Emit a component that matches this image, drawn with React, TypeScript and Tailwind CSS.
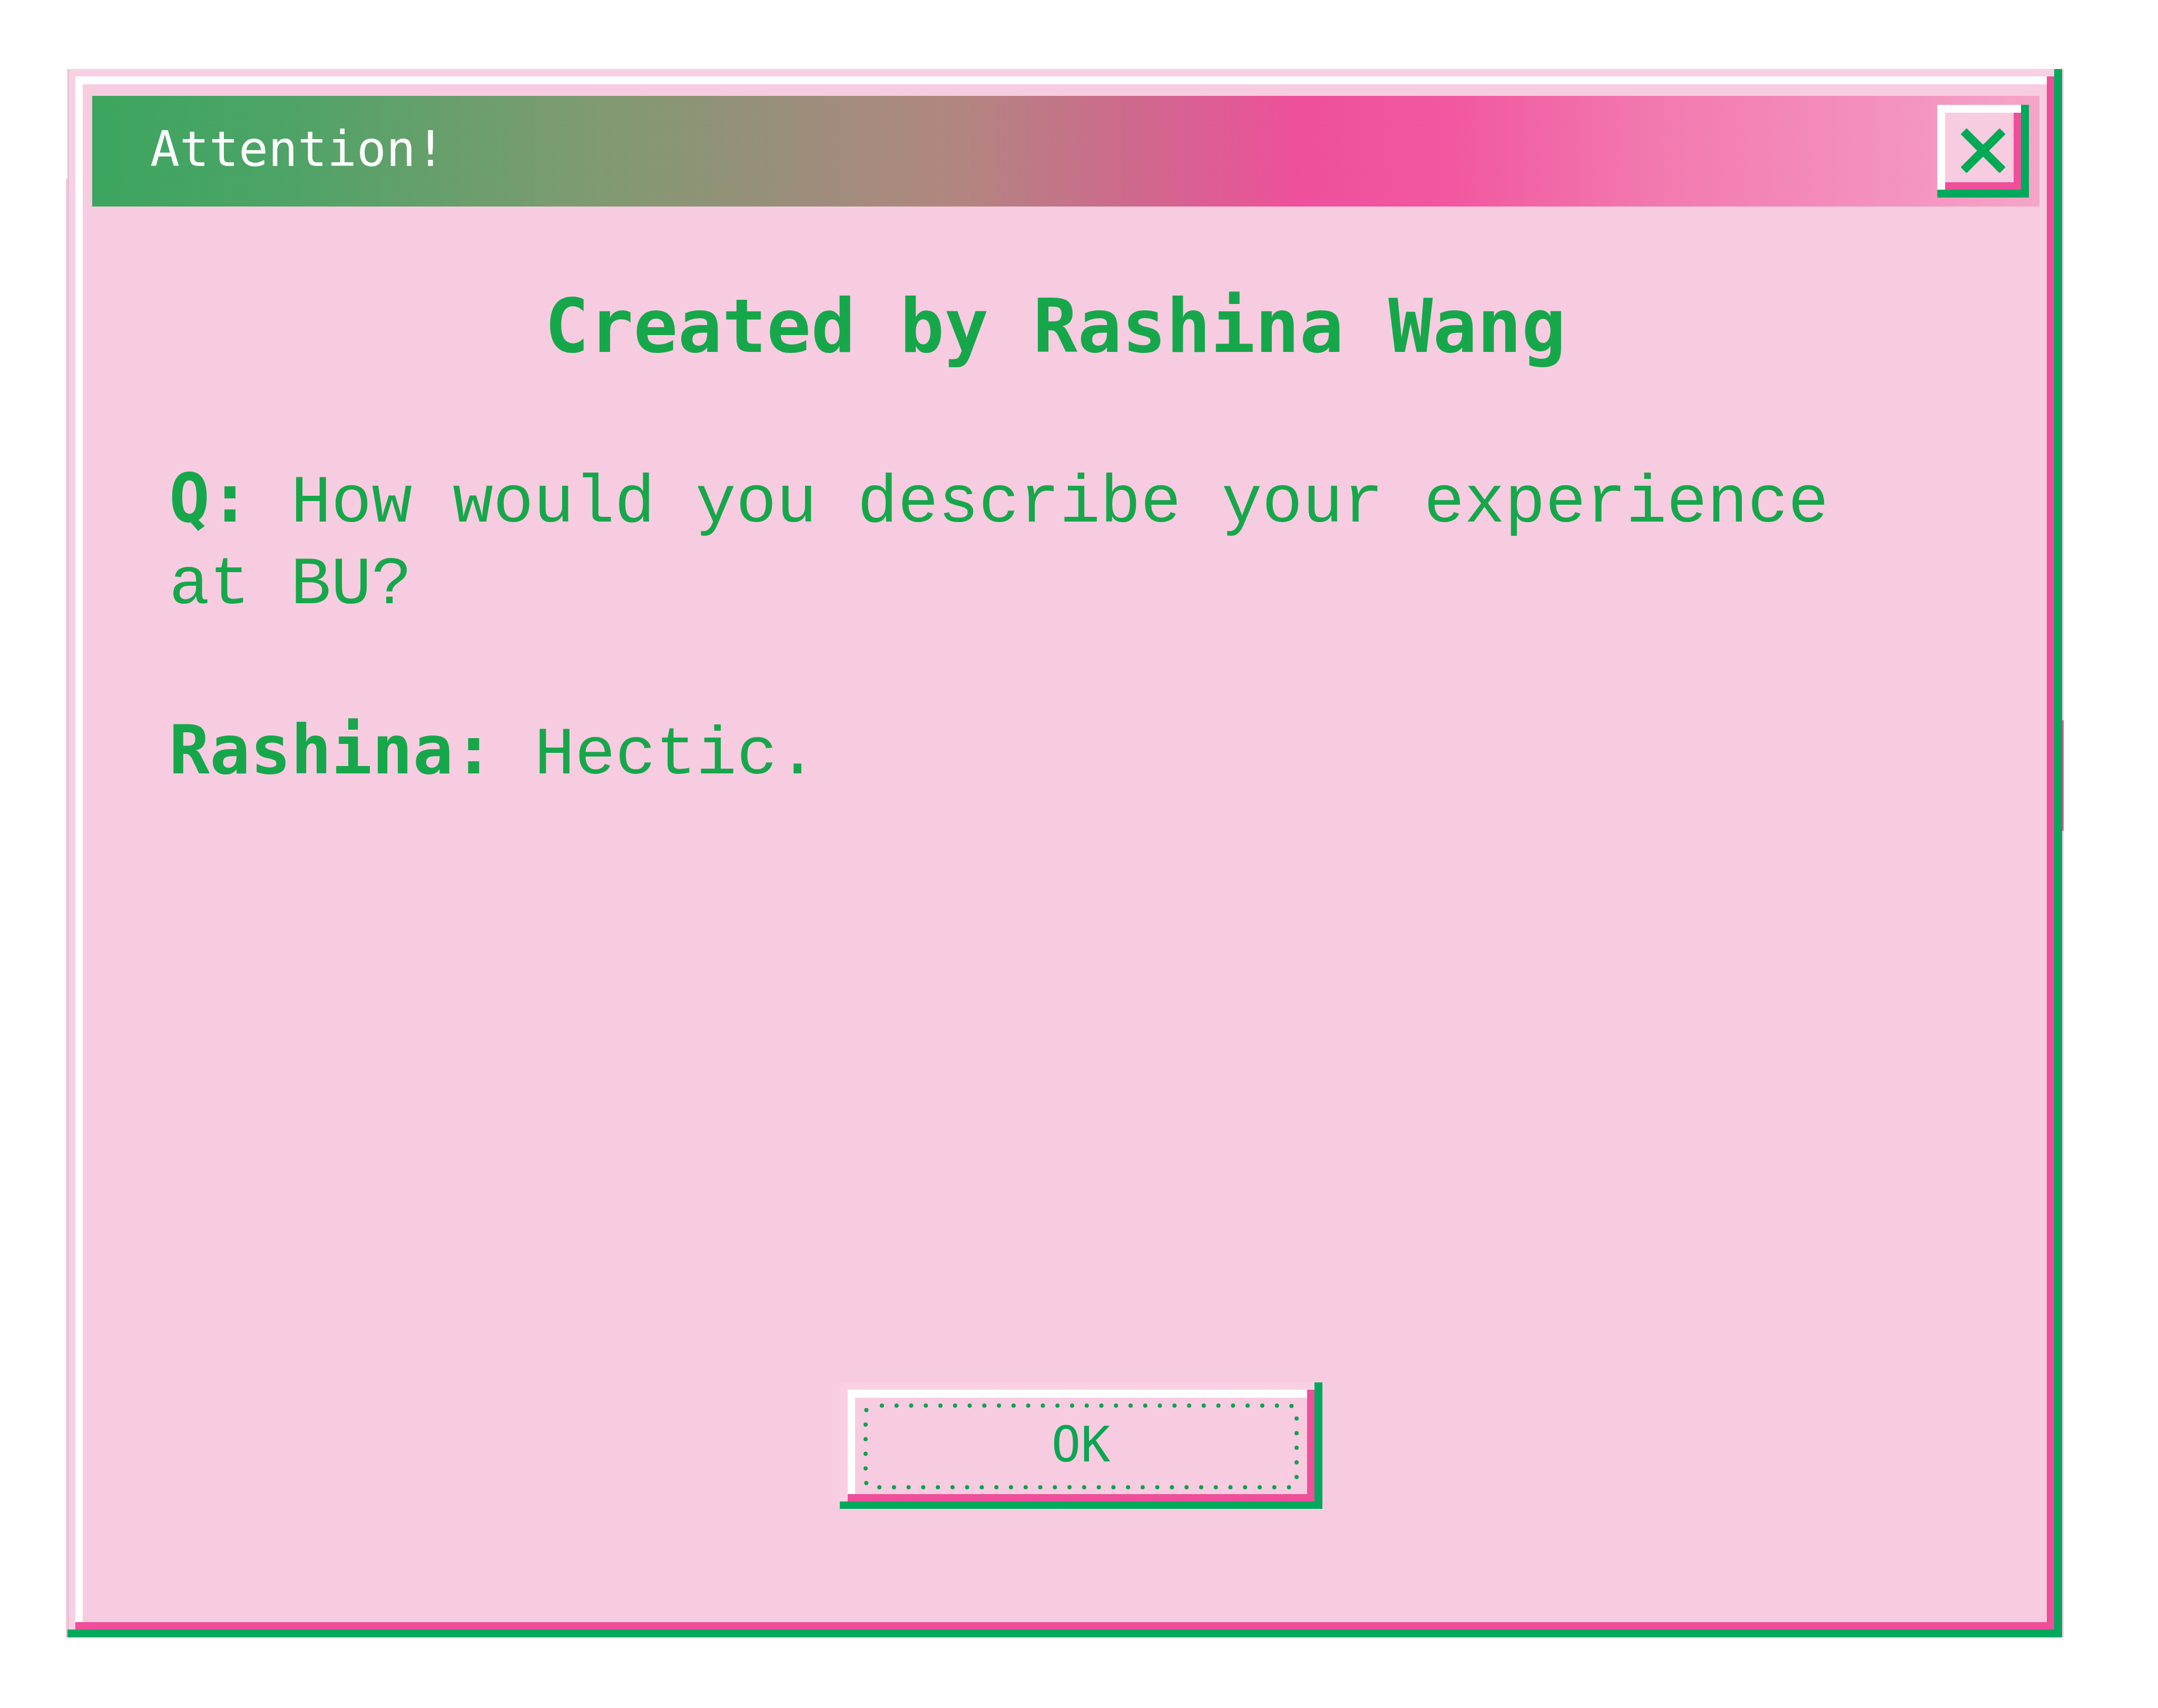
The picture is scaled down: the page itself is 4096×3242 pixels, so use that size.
export default function App() {
  return (
    <main className="flex min-h-screen bg-white pt-[131px] pr-[179px] pb-[134px] pl-[128px]">
      <section
        role="dialog"
        aria-labelledby="dialog-title"
        className="relative flex flex-1 border-r-[3px] border-[#fbcbe6]"
      >
        <span className="absolute top-[208px] bottom-0 -left-[3px] w-[3px] bg-[#fcc6e6]" />
        <span className="absolute top-[1236px] -right-[3px] h-[210px] w-[3px] bg-[#dc5a96]" />
        <div className="flex flex-1 border-r-[15px] border-b-[15px] border-[#00a95c]">
          <div className="flex flex-1 border-l-[3px] border-[#e2c3cc]">
            <div className="flex flex-1 border-t-[14px] border-l-[12px] border-[#f9d0e3]">
              <div className="flex flex-1 border-r-[14px] border-b-[14px] border-[#ee4e9a]">
                <div className="flex flex-1 flex-col border-t-[15px] border-l-[14px] border-white bg-[#f7cce0]">
                  <TitleBar />
                  <Message />
                  <Footer />
                </div>
              </div>
            </div>
          </div>
        </div>
      </section>
    </main>
  );
}

function TitleBar() {
  return (
    <header className="mt-[22px] mr-[14px] ml-[18px] flex h-[210px] items-center justify-between bg-[linear-gradient(to_right,#3ca55e_0%,#4ba465_9%,#7d9b70_25%,#a08c7c_38%,#b0877f_44%,#cd6a8c_53%,#ee509b_62%,#f158a0_70%,#f27bb0_81%,#f495c0_94%,#f4a6c8_100%)] pr-[20px] pl-[110px]">
      <h1
        id="dialog-title"
        className="pb-[8px] font-['DejaVu_Sans_Mono',monospace] text-[93px] leading-[112px] text-white"
      >
        Attention!
      </h1>
      <button type="button" aria-label="Close" className="flex h-[176px] w-[174px] border-r-[15px] border-b-[15px] border-[#00a95c]">
        <span className="flex flex-1 self-stretch border-t-[15px] border-l-[15px] border-white">
          <span className="flex flex-1 items-center justify-center border-r-[14px] border-b-[14px] border-[#ee4e9a] bg-[#f7cce0] pt-[12px] pl-[14px]">
            <svg viewBox="0 0 84 84" className="size-[84px]" fill="none" stroke="#00a953" strokeWidth="16">
              <path d="M5 5 79 79M79 5 5 79" />
            </svg>
          </span>
        </span>
      </button>
    </header>
  );
}

function Message() {
  return (
    <div className="flex-1 pt-[144px] pr-[200px] pl-[164px] text-[#16a74b]">
      <h2 className="text-center font-['DejaVu_Sans_Mono',monospace] text-[140px] leading-[168px] font-bold">
        Created by Rashina Wang
      </h2>
      <div className="mt-[174px] flex flex-col gap-[168px] font-['Liberation_Mono',monospace] text-[128px] leading-[155px]">
        <p>
          <strong className="font-['DejaVu_Sans_Mono',monospace] leading-none font-bold">Q:</strong> How would you describe your experience at BU?
        </p>
        <p>
          <strong className="font-['DejaVu_Sans_Mono',monospace] leading-none font-bold">Rashina:</strong> Hectic.
        </p>
      </div>
    </div>
  );
}

function Footer() {
  return (
    <footer className="flex justify-center pb-[215px] pl-[61px]">
      <button type="button" className="flex h-[240px] w-[916px] border-r-[15px] border-b-[14px] border-[#00a95c]">
        <span className="flex flex-1 self-stretch border-t-[14px] border-l-[15px] border-[#f9d0e3]">
          <span className="flex flex-1 border-r-[14px] border-b-[14px] border-[#ee4e9a]">
            <span className="relative flex flex-1 items-center justify-center border-t-[15px] border-l-[14px] border-white bg-[#f7cce0] pb-[6px]">
              <svg
                viewBox="0 0 859 183"
                className="absolute inset-0 size-full"
                fill="none"
                stroke="#10a050"
                strokeWidth="8"
                strokeLinecap="round"
                strokeDasharray="0 27.8"
              >
                <path d="M51 15H825a14 14 0 0 1 14 14V156a14 14 0 0 1-14 14H34a14 14 0 0 1-14-14V29a14 14 0 0 1 10-13" />
              </svg>
              <span className="font-['DejaVu_Sans_Mono',monospace] text-[93px] leading-[112px] text-[#0aa652]">OK</span>
            </span>
          </span>
        </span>
      </button>
    </footer>
  );
}
